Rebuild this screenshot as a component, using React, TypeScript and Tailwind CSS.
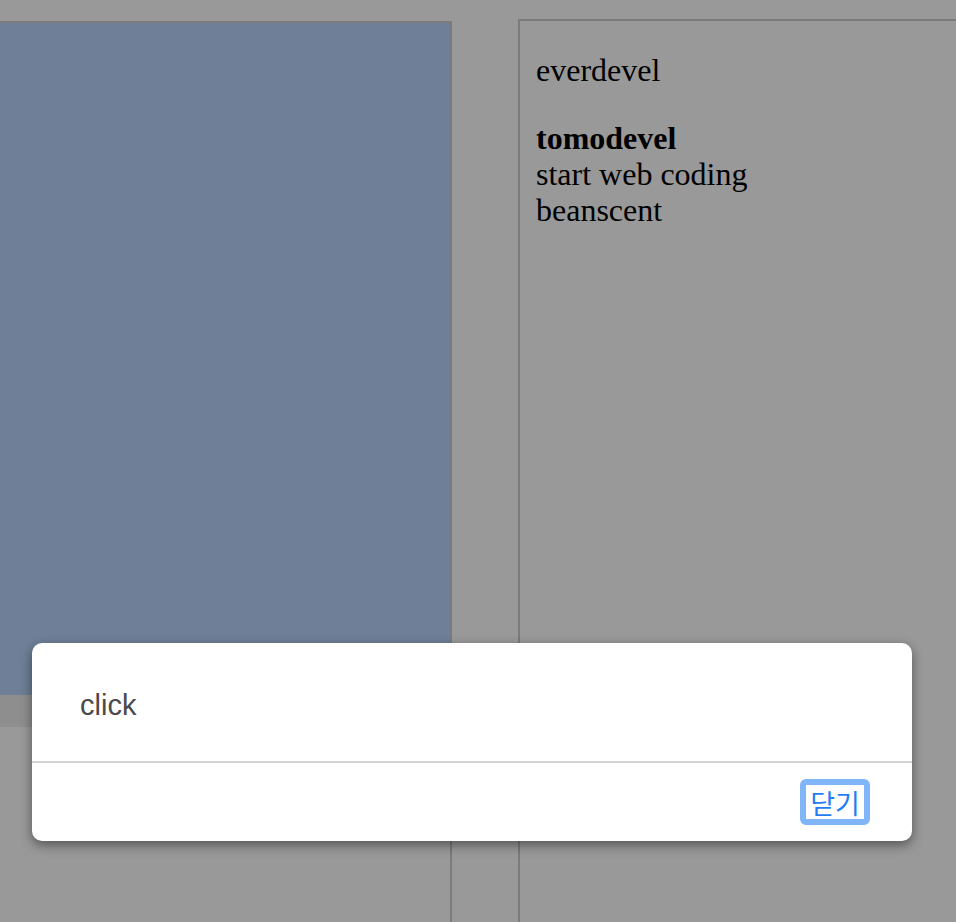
import React from "react";

export default function App() {
  return (
    <div className="relative h-[922px] w-[956px] overflow-hidden bg-[#999999]">
      <div className="flex h-full items-start gap-[66px]">
        <div className="mt-[21px] flex h-[901px] w-[452px] shrink-0 flex-col border-t-2 border-r-2 border-[#7b7b7b]">
          <div className="h-[672px] bg-[#6e7f97]" />
          <div className="h-[32px] bg-[#8e8e8e]" />
          <div className="flex-1" />
        </div>
        <div
          className="mt-[19px] h-[903px] flex-1 border-t-2 border-l-2 border-[#7b7b7b] pl-[16px] pt-[31px] text-[32px] leading-[36px] text-black"
          style={{ fontFamily: '"Liberation Serif", "Times New Roman", serif' }}
        >
          <p>everdevel</p>
          <p className="mt-[32px]">
            <b>tomodevel</b>
            <br />
            start web coding
            <br />
            beanscent
          </p>
        </div>
      </div>

      <div className="absolute left-[32px] top-[643px] flex h-[198px] w-[880px] flex-col rounded-[10px] bg-white shadow-[0_4px_12px_rgba(0,0,0,0.45)]">
        <div
          className="flex h-[118px] items-center pl-[48px] pt-[8px] text-[29px] text-[#4a4a4a]"
          style={{ fontFamily: '"Liberation Sans", Arial, sans-serif' }}
        >
          click
        </div>
        <div className="h-[2px] bg-[#d3d3d3]" />
        <div className="flex flex-1 items-center justify-end pr-[42px]">
          <button
            className="flex h-[46px] w-[70px] items-center justify-center rounded-[6px] border-[6px] border-[#80b5f8] bg-white p-0 text-[27px] leading-none text-[#1f7ef5]"
            style={{ fontFamily: '"Noto Sans CJK KR", sans-serif' }}
          >
            닫기
          </button>
        </div>
      </div>
    </div>
  );
}
